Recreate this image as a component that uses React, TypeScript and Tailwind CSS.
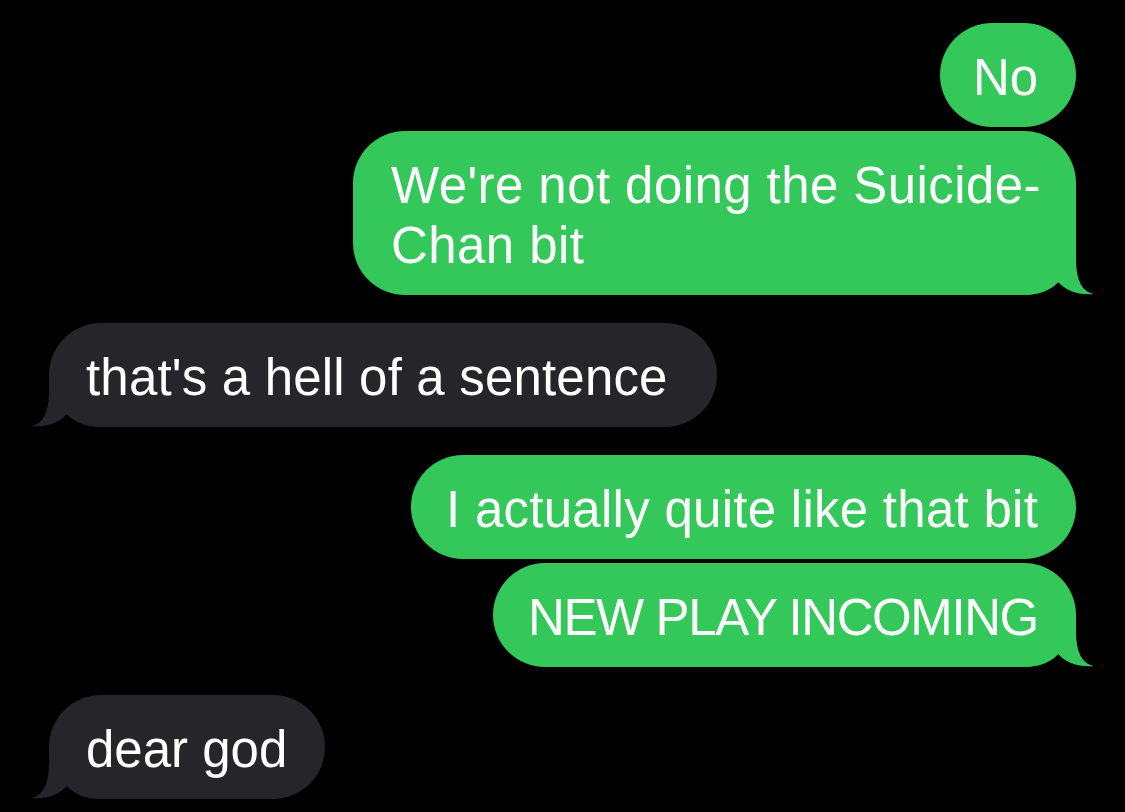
import React from "react";

type Msg = {
  text: React.ReactNode;
  me: boolean;
  tail: boolean;
  w: string;
  pl: string;
  gap: string;
  track: string;
};

const GREEN = "#34C85A";
const GRAY = "#262529";

function TailRight() {
  return (
    <svg
      className="absolute bottom-0 right-[-18px] w-[70px] h-[52px]"
      viewBox="0 0 70 52"
      aria-hidden="true"
    >
      <path
        d="M0 0 L52 0 L52 16 Q52 48 70 51 Q47 53 34 39 Q24 51 2 52 L0 52 Z"
        fill={GREEN}
      />
    </svg>
  );
}

function TailLeft() {
  return (
    <svg
      className="absolute bottom-0 left-[-18px] w-[70px] h-[52px]"
      viewBox="0 0 70 52"
      aria-hidden="true"
    >
      <path
        d="M70 0 L18 0 L18 16 Q18 48 0 51 Q23 53 36 39 Q46 51 68 52 L70 52 Z"
        fill={GRAY}
      />
    </svg>
  );
}

export default function App() {
  const msgs: Msg[] = [
    { text: "No", me: true, tail: false, w: "w-[136px]", pl: "pl-[33px]", gap: "mt-0", track: "tracking-normal" },
    {
      text: (
        <>
          We're not doing the Suicide-
          <br />
          Chan bit
        </>
      ),
      me: true,
      tail: true,
      w: "w-[723px]",
      pl: "pl-[38px]",
      gap: "mt-[4px]",
      track: "tracking-[0.42px]",
    },
    { text: "that's a hell of a sentence", me: false, tail: true, w: "w-[668px]", pl: "pl-[37px]", gap: "mt-[28px]", track: "tracking-[0.18px]" },
    { text: "I actually quite like that bit", me: true, tail: false, w: "w-[665px]", pl: "pl-[35px]", gap: "mt-[28px]", track: "tracking-[0.27px]" },
    { text: "NEW PLAY INCOMING", me: true, tail: true, w: "w-[583px]", pl: "pl-[35px]", gap: "mt-[4px]", track: "tracking-[-1.4px]" },
    { text: "dear god", me: false, tail: true, w: "w-[276px]", pl: "pl-[37px]", gap: "mt-[28px]", track: "tracking-normal" },
  ];

  return (
    <div
      className="min-h-screen w-full bg-black pt-[23px] px-[49px] flex flex-col antialiased"
      style={{ fontFamily: '"Liberation Sans", Arial, sans-serif' }}
    >
      {msgs.map((m, i) => (
        <div key={i} className={`flex ${m.me ? "justify-end" : "justify-start"} ${m.gap}`}>
          <div
            className={`relative ${m.w} ${m.pl} ${m.track} pt-[25px] pb-[19px] rounded-[52px] text-white text-[51px] leading-[60px] whitespace-nowrap ${
              m.me ? "bg-[#34C85A]" : "bg-[#262529]"
            }`}
          >
            {m.tail && (m.me ? <TailRight /> : <TailLeft />)}
            <span className="relative">{m.text}</span>
          </div>
        </div>
      ))}
    </div>
  );
}
